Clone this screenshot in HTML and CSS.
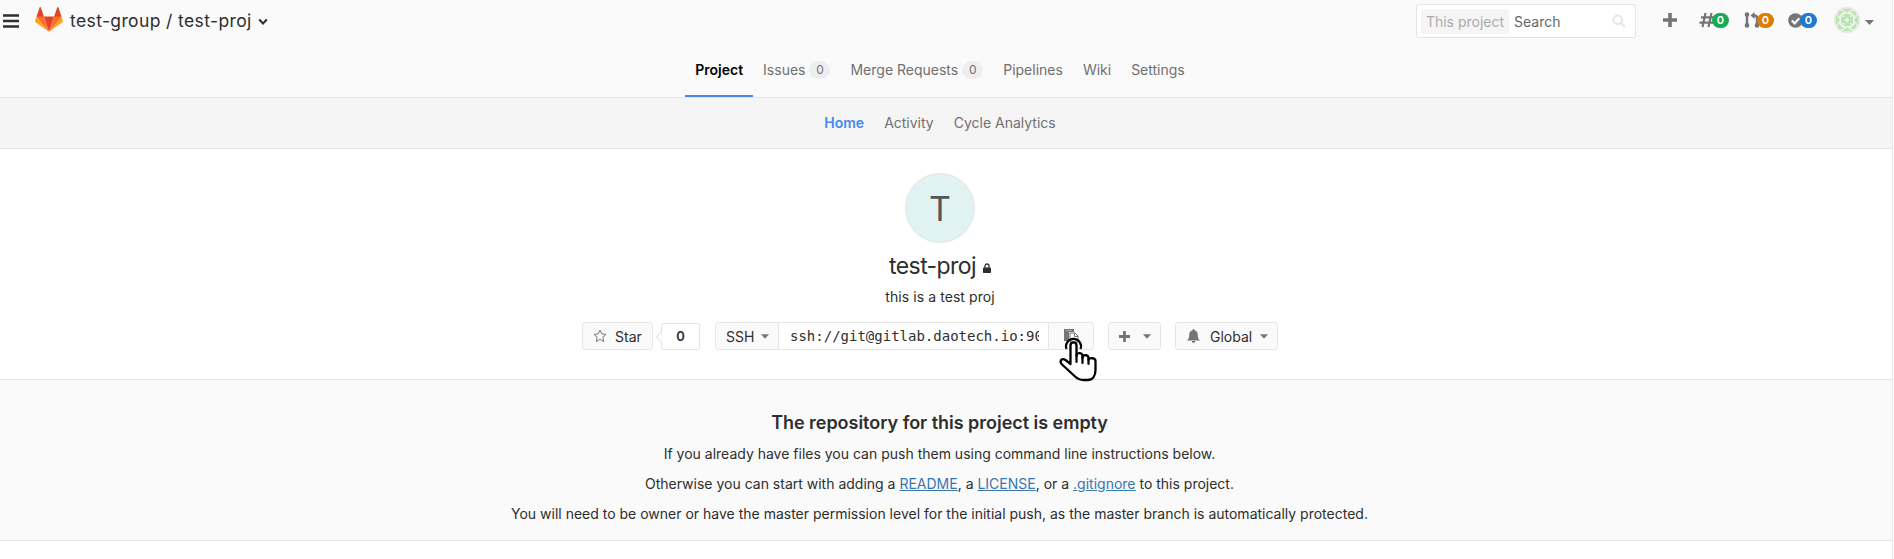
FILE: index.html
```html
<!DOCTYPE html>
<html lang="en">
<head>
<meta charset="utf-8">
<title>test-group / test-proj</title>
<link rel="stylesheet" href="styles.css">
</head>
<body>
<div class="page">
<header class="header">
<div class="topbar">
<svg class="burger" width="16" height="14" viewBox="0 0 16 14"><path d="M0 1.5h16M0 7h16M0 12.5h16" stroke="#2e2e2e" stroke-width="2.6"/></svg>
<svg class="logo" width="28" height="27" viewBox="0 0 36 36" preserveAspectRatio="none"><path fill="#e24329" d="M2 14l9.38 9v-9l-4-12.28c-.205-.632-1.176-.632-1.38 0zM34 14l-9.38 9v-9l4-12.28c.205-.632 1.176-.632 1.38 0zM18 34.38L11.38 14h13.24z"/><path fill="#fc6d26" d="M18 34.38L11.38 14H2l6 8.25zM18 34.38L24.62 14H34l-6 8.25z"/><path fill="#fca326" d="M2 14L.1 20.16c-.18.565 0 1.2.5 1.56L18 34.38zM34 14l1.9 6.16c.18.565 0 1.2-.5 1.56L18 34.38z"/></svg>
<span class="title">test-group / test-proj</span>
<svg class="chev" width="10" height="8" viewBox="0 0 10 8"><path d="M1.2 1.5L5 5.5l3.800-4" fill="none" stroke="#2e2e2e" stroke-width="2"/></svg>
<div class="search"><span class="scope">This project</span><span class="query">Search</span><svg width="14" height="14" viewBox="0 0 14 14"><circle cx="5.700" cy="5.700" r="4.300" fill="none" stroke="#e4e7ed" stroke-width="2"/><path d="M9 9l4 4" stroke="#e4e7ed" stroke-width="2.400"/></svg></div>
<svg class="plus" width="14" height="14" viewBox="0 0 14 14"><path d="M7 0v14M0 7h14" stroke="#757575" stroke-width="3.600"/></svg>
<div class="counter issues"><svg width="16" height="16" viewBox="0 0 16 16"><path d="M6.500 1L3.500 15M12.500 1l-3 14M2 5.300h13.500M.5 10.700H14" fill="none" stroke="#757575" stroke-width="2.200"/></svg><span class="pill green">0</span></div>
<div class="counter mrs"><svg width="16" height="16" viewBox="0 0 16 16"><path d="M3 3v10M13 13V5.500Q13 3.500 10 3.500H8.500" fill="none" stroke="#757575" stroke-width="2.400"/><path d="M10.500 0v7L6.500 3.500z" fill="#757575"/><circle cx="3" cy="2.600" r="2.300" fill="#757575"/><circle cx="3" cy="13.400" r="2.300" fill="#757575"/><circle cx="13" cy="13.400" r="2.300" fill="#757575"/></svg><span class="pill orange">0</span></div>
<div class="counter todos"><svg width="15" height="15" viewBox="0 0 15 15"><circle cx="7.500" cy="7.500" r="7.300" fill="#757575"/><path d="M3.800 7.500l2.800 2.800 4.700-5" fill="none" stroke="#fafafa" stroke-width="2.200"/></svg><span class="pill blue">0</span></div>
<svg class="ident" width="26" height="26" viewBox="0 0 26 26"><circle cx="13" cy="13" r="12.500" fill="#f1f1ef" stroke="#e3e3e1"/><g fill="#b9e6b0"><path d="M8 1.800h10L13 6zM8 24.200h10L13 20zM1.800 8v10L6 13zM24.200 8v10L20 13z"/><path d="M4 10l6-6H5.500L3.500 7zM22 10l-6-6h4.500l2 3zM4 16l6 6H5.500l-2-3zM22 16l-6 6h4.500l2-3z"/><path d="M10 7h6l3 3v6l-3 3h-6l-3-3v-6z"/></g><path d="M13 10.500l2.500 2.500-2.500 2.500-2.500-2.500zM10 8v2H8zM16 8v2h2zM10 18v-2H8zM16 18v-2h2z" fill="#e9f5e6"/></svg>
<svg class="caret" width="9" height="5" viewBox="0 0 9 5"><path d="M0 0h9L4.500 5z" fill="#757575"/></svg>
</div>
<nav class="tabs">
<a class="tab active">Project</a>
<a class="tab">Issues<span class="badge">0</span></a>
<a class="tab">Merge Requests<span class="badge">0</span></a>
<a class="tab">Pipelines</a>
<a class="tab">Wiki</a>
<a class="tab">Settings</a>
</nav>
</header>
<nav class="subnav"><a class="current">Home</a><a>Activity</a><a>Cycle Analytics</a></nav>
<section class="project">
<div class="avatar">T</div>
<h1 class="name">test-proj<svg width="8" height="10" viewBox="0 0 8 10"><path d="M2 5V3a2 2 0 0 1 4 0v2" fill="none" stroke="#2e2e2e" stroke-width="1.300"/><rect y="4.500" width="8" height="5.500" rx=".7" fill="#2e2e2e"/></svg></h1>
<p class="desc">this is a test proj</p>
<div class="controls">
<button class="btn star"><svg width="14" height="14" viewBox="0 0 14 14"><path d="M7 1l1.800 3.900 4.200.5-3.100 2.900.8 4.200L7 10.400l-3.700 2.100.8-4.200L1 5.400l4.200-.5z" fill="none" stroke="#757575"/></svg><span>Star</span></button>
<div class="count">0<svg width="6" height="12" viewBox="0 0 6 12"><path d="M5.500 0L.7 6l4.800 6" fill="#fff" stroke="#dcdcdc"/></svg></div>
<div class="clone"><button class="btn ssh">SSH<svg width="8" height="5" viewBox="0 0 9 5"><path d="M0 0h9L4.500 5z" fill="#757575"/></svg></button><div class="url"><span>ssh://git@gitlab.daotech.io:90</span></div><button class="btn copy"><svg width="15" height="14" viewBox="0 0 15 14"><path d="M0 0h10v3H5v9H0z" fill="#757575"/><path d="M2 1.500h6" stroke="#aaa"/><path d="M6 4h5l3 3v6H6z" fill="#fff" stroke="#757575"/><path d="M10.500 4v3.500H14" fill="none" stroke="#757575"/></svg></button>
<svg class="cursor" width="39" height="47" viewBox="0 0 39 47"><path d="M7.500 14A7.500 7.500 0 1 1 21.500 14" fill="none" stroke="#000" stroke-width="2.200"/><path d="M11.500 29V10.500c0-4.300 6-4.300 6 0V21v-1c1-3 6-2.300 6 1v2-1c1-3 6-2 6 1v2c1-3 7-2 7 1v9c0 6-3 10-8 10h-4c-4 0-7-2-9-4L2.500 29c-2.500-4 1-6 4-4z" fill="#fff" stroke="#000" stroke-width="2.300" stroke-linejoin="round"/><path d="M17.500 20v7M23.500 22v6M29.500 24v5" stroke="#000" stroke-width="2.200" stroke-linecap="round"/></svg></div>
<button class="btn add"><svg width="11" height="11" viewBox="0 0 11 11"><path d="M5.500 0v11M0 5.500h11" stroke="#757575" stroke-width="2.800"/></svg><svg width="8" height="5" viewBox="0 0 9 5"><path d="M0 0h9L4.500 5z" fill="#757575"/></svg></button>
<button class="btn global"><svg width="13" height="14" viewBox="0 0 13 14"><path d="M6.500 0q1 0 1 1.200C10 1.700 10.800 4 10.800 6c0 3 .9 4.300 2.200 5.500H0C1.300 10.300 2.200 9 2.200 6c0-2 .8-4.300 3.300-4.800Q5.500 0 6.500 0zM4.700 12h3.600q-.3 2-1.800 2t-1.800-2z" fill="#757575"/></svg><span>Global</span><svg width="8" height="5" viewBox="0 0 9 5"><path d="M0 0h9L4.500 5z" fill="#757575"/></svg></button>
</div>
</section>
<section class="empty">
<h2>The repository for this project is empty</h2>
<p>If you already have files you can push them using command line instructions below.</p>
<p>Otherwise you can start with adding a <a>README</a>, a <a>LICENSE</a>, or a <a>.gitignore</a> to this project.</p>
<p>You will need to be owner or have the master permission level for the initial push, as the master branch is automatically protected.</p>
</section>
</div>
</body>
</html>
```
FILE: styles.css
```css
* { box-sizing: border-box; }
body { margin: 0; background: #fff; font-family: Inter, "Liberation Sans", sans-serif; font-size: 14px; color: #2e2e2e; }
svg { display: block; flex: none; }
h1, h2, p { margin: 0; }
.page { width: 1893px; height: 559px; border-right: 1px solid #e8e8e8; }
.header { height: 98px; background: #fafafa; border-bottom: 1px solid #e5e5e5; }
.topbar { display: flex; align-items: center; height: 42px; padding-left: 3px; }
.logo { margin-left: 16px; margin-top: -3px; }
.title { margin: -2px 0 0 7px; width: 182px; font-size: 17.500px; letter-spacing: 0.38px; white-space: nowrap; }
.chev { margin-left: 6px; margin-top: 2px; }
.search { display: flex; align-items: center; width: 220px; height: 34px; margin-left: auto; padding: 0 9px 0 4px; background: #fff; border: 1px solid #e5e5e5; border-radius: 2px; }
.scope { width: 88px; height: 25px; line-height: 26px; text-align: center; white-space: nowrap; background: #f5f5f5; color: #aaa; border-radius: 2px; }
.query { margin-left: 5px; color: #666; flex: 1; }
.plus { margin-left: 27px; margin-top: -2px; }
.counter { display: flex; align-items: center; height: 20px; margin-top: -2px; }
.pill { height: 15px; line-height: 15px; width: 17px; margin-left: -3px; border-radius: 8px; text-align: center; color: #fff; font-size: 11px; font-weight: 600; }
.green { background: #1aaa55; }
.orange { background: #de7e00; }
.blue { background: #1f78d1; }
.issues { margin-left: 22px; }
.mrs { margin-left: 15px; }
.todos { margin-left: 14px; }
.ident { margin-left: 17px; margin-top: -2px; }
.caret { margin-left: 5px; margin-right: 18px; margin-top: 2px; }
.tabs { display: flex; justify-content: center; width: 1880px; height: 55px; }
.tab { display: flex; align-items: center; height: 55px; padding: 0 10px; color: #707070; white-space: nowrap; }
.tab.active { color: #000; font-weight: 600; border-bottom: 2px solid #4688f1; padding-top: 2px; }
.badge { margin-left: 4px; width: 21px; height: 18px; line-height: 18px; text-align: center; border-radius: 9px; background: #eee; font-size: 12px; }
.subnav { display: flex; justify-content: center; align-items: center; gap: 20px; height: 51px; padding: 0 12px 2px 0; background: #f5f5f5; border-bottom: 1px solid #e5e5e5; color: #707070; }
.subnav .current { color: #4688f1; font-weight: 600; }
.project { display: flex; flex-direction: column; align-items: center; width: 1880px; height: 230px; padding-top: 24px; }
.avatar { width: 70px; height: 70px; border-radius: 50%; border: 1px solid #e5e5e5; background: #e0f2f1; color: #555; font-size: 34px; line-height: 69px; text-align: center; }
.name { display: flex; align-items: center; gap: 7px; height: 30px; margin-top: 8px; font-size: 23px; font-weight: 400; letter-spacing: -0.6px; }
.name svg { margin-top: 3px; }
.desc { height: 20px; line-height: 20px; margin-top: 6px; letter-spacing: 0.08px; }
.controls { display: flex; align-items: center; height: 28px; margin-top: 15px; margin-right: 20px; }
.btn { display: flex; align-items: center; height: 28px; margin: 0; padding: 0; background: #fafafa; border: 1px solid #e5e5e5; border-radius: 3px; font: inherit; color: #2e2e2e; }
.star { width: 71px; padding-left: 10px; gap: 8px; }
.count { position: relative; width: 39px; height: 27px; line-height: 25px; margin-left: 8px; border: 1px solid #e5e5e5; border-radius: 2px; text-align: center; font-weight: 600; font-size: 13px; }
.count svg { position: absolute; left: -6px; top: 7px; }
.clone { position: relative; display: flex; margin-left: 15px; }
.ssh { width: 64px; padding-left: 10px; gap: 7px; border-radius: 3px 0 0 3px; }
.url { width: 269px; height: 28px; padding: 0 9px 0 11px; border: solid #e5e5e5; border-width: 1px 0; line-height: 26px; }
.url span { display: block; overflow: hidden; white-space: nowrap; font-family: "DejaVu Sans Mono", monospace; font-size: 14px; }
.copy { width: 46px; padding-left: 15px; border-radius: 0 3px 3px 0; }
.cursor { position: absolute; left: 344px; top: 13px; }
.add { width: 53px; margin-left: 14px; padding-left: 10px; gap: 13px; }
.global { width: 103px; margin-left: 14px; padding-left: 11px; gap: 8px; }
.global span { margin-left: 2px; }
.empty { height: 162px; padding: 31px 13px 0 0; background: #fafafa; border: solid #e5e5e5; border-width: 1px 0; text-align: center; }
.empty h2 { height: 24px; line-height: 24px; font-size: 18px; font-weight: 600; letter-spacing: -0.03px; }
.empty p { height: 20px; line-height: 20px; margin-top: 10px; white-space: nowrap; }
.empty h2 + p { margin-top: 9px; }
.empty a { color: #3777b0; text-decoration: underline; }
```
